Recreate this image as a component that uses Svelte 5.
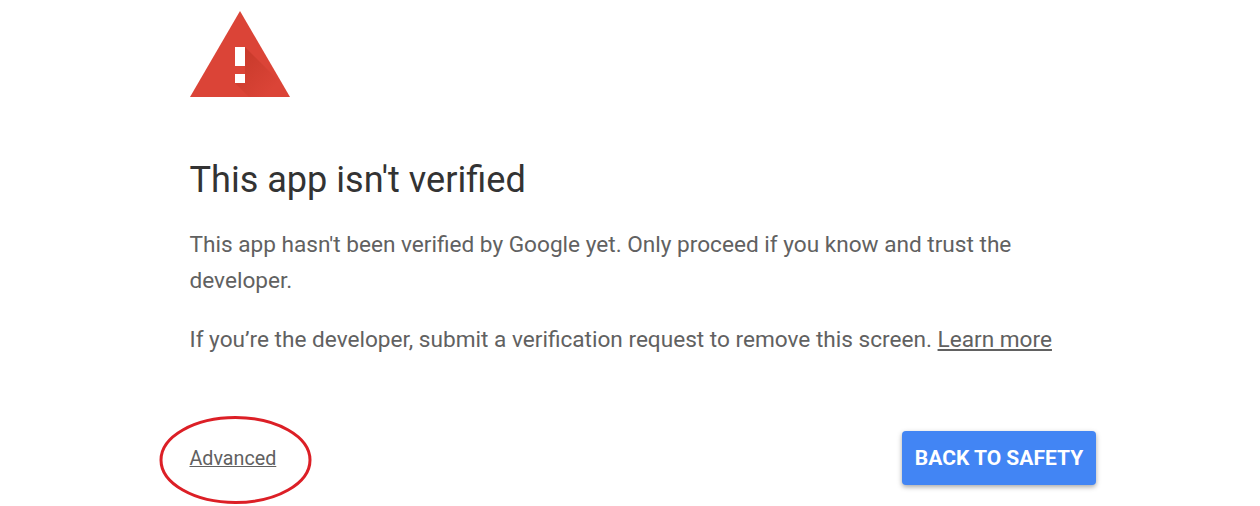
<script>
  const learnMore = "Learn more";
</script>

<main class="page">
  <svg class="warning" width="100" height="88" viewBox="0 0 100 88" aria-hidden="true">
    <defs>
      <linearGradient id="fade" x1="45" y1="36" x2="85" y2="76" gradientUnits="userSpaceOnUse">
        <stop offset="0" stop-color="#a52714" stop-opacity="0.42" />
        <stop offset="1" stop-color="#a52714" stop-opacity="0" />
      </linearGradient>
    </defs>
    <path d="M50 0 L100 86 L0 86 Z" fill="#db4437" />
    <path d="M55 36 L93 74 L100 86 L59 86 L45 72 L55 63 Z" fill="url(#fade)" />
    <rect x="45" y="36" width="10" height="19" fill="#fff" />
    <rect x="45" y="63" width="10" height="9" fill="#fff" />
  </svg>

  <h1>This app isn't verified</h1>
  <p class="first">This app hasn't been verified by Google yet. Only proceed if you know and trust the developer.</p>
  <p class="second">If you’re the developer, submit a verification request to remove this screen. <a href="#learn">{learnMore}</a></p>

  <div class="actions">
    <div class="advanced">
      <a href="#advanced">Advanced</a>
      <svg class="circle" width="154" height="90" viewBox="0 0 154 90" aria-hidden="true">
        <ellipse cx="76.5" cy="45" rx="74.5" ry="42.5" fill="none" stroke="#dc1f26" stroke-width="3" />
      </svg>
    </div>
    <button type="button">BACK TO SAFETY</button>
  </div>
</main>

<style>
  :global(body) {
    margin: 0;
    background: #fff;
    font-family: Roboto, "Liberation Sans", sans-serif;
  }

  .page {
    width: 906.5px;
    min-height: 506px;
    box-sizing: border-box;
    margin-left: 189.5px;
    padding-top: 11px;
    color: #616161;
  }

  .warning {
    display: block;
    margin-left: 0.5px;
  }

  h1 {
    margin: 57px 0 0;
    font-size: 36.1px;
    line-height: 48px;
    font-weight: 400;
    color: #333;
  }

  p {
    margin: 0;
    width: 860px;
    font-size: 22.62px;
    line-height: 36px;
  }

  .first {
    margin-top: 23px;
  }

  .second {
    margin-top: 23px;
    width: 900px;
  }

  a {
    color: #616161;
  }

  .actions {
    display: flex;
    align-items: center;
    justify-content: space-between;
    margin-top: 73px;
  }

  .advanced {
    position: relative;
    font-size: 19.7px;
  }

  .circle {
    position: absolute;
    left: -31px;
    top: -32px;
  }

  button {
    width: 194px;
    height: 54px;
    border: none;
    border-radius: 4px;
    background: #4285f4;
    color: #fff;
    font: 700 21px Roboto, sans-serif;
    box-shadow: 0 2px 5px rgba(0, 0, 0, 0.35);
  }
</style>
